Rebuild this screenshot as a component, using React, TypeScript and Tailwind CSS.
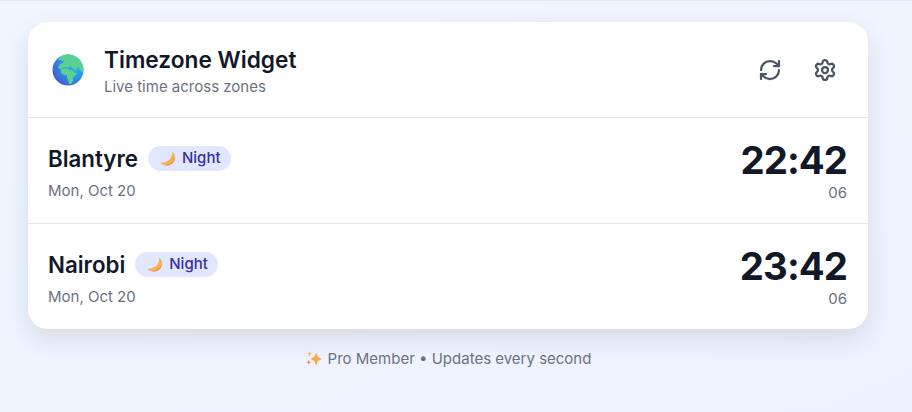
import { RefreshCw, Settings } from "lucide-react";

function Globe() {
  return (
    <svg width="32" height="32" viewBox="0 0 32 32" aria-hidden="true">
      <defs>
        <radialGradient id="sea" cx="0.8" cy="0.25" r="1">
          <stop offset="0" stopColor="#27c0f2" />
          <stop offset="0.55" stopColor="#2d8ce8" />
          <stop offset="1" stopColor="#4f4cc0" />
        </radialGradient>
        <clipPath id="disc">
          <circle cx="16" cy="16" r="15.500" />
        </clipPath>
      </defs>
      <circle cx="16" cy="16" r="15.500" fill="url(#sea)" />
      <g clipPath="url(#disc)" fill="#5bd190">
        <path d="M10 0h19v9l3 7-3 2-2-4-2-1-1 4-3-3-3-2-2 2-3-1-4 2-3-1 2-4 3-1 1-2-3-1-3 1z" />
        <path d="M9 15l4-1 3 1 3 1 3 1 1 2 2 0-2 3-2 2v3l-2 3-2 0-1-4-1-3 0-2-3 0-3-2z" />
      </g>
    </svg>
  );
}

function Moon() {
  return (
    <svg width="16" height="16" viewBox="0 0 16 16" aria-hidden="true">
      <path d="M12.200 1c3 1.500 3.600 5.800 1.800 9C11.500 14 6 15.800 1.200 13c-.6-.4-.4-1.100.2-1.200C6.500 11.500 12.800 8 12.200 1z" fill="#f7b052" />
      <path d="M14.800 6c-.2 3.800-3 7-9.800 8.200 4 .8 7.500-.9 9.200-4 .6-1.300.8-2.800.6-4.200z" fill="#e58a32" />
    </svg>
  );
}

function Sparkles() {
  return (
    <svg width="16" height="16" viewBox="0 0 16 16" aria-hidden="true">
      <path d="M10.200 1.500l1.500 4.300L16 8l-4.300 2.100L10.200 15 8.500 10.100 4.300 8l4.200-2.200z" fill="#fda643" />
      <path d="M3.500 0l.7 2 1.800.8-1.800.8-.7 2-.7-2L1 2.800l1.800-.8z" fill="#fdb45e" />
      <path d="M2.800 8.500l.7 2 1.800.8-1.800.8-.7 2-.7-2-1.800-.8 1.800-.8z" fill="#fb8a5e" />
    </svg>
  );
}

function Row({ city, time, border }: { city: string; time: string; border?: boolean }) {
  return (
    <div className={`flex items-center justify-between pr-[21px] pl-5 ${border ? "h-[106px] border-b border-[#e5e7eb]" : "h-[105px]"}`}>
      <div className="pt-1">
        <div className="flex items-center gap-2.5">
          <span className="text-[22.3px] leading-7 font-semibold text-[#111827]">{city}</span>
          <span className="flex h-[25px] items-center gap-1.5 rounded-full bg-[#e0e7ff] pr-2.5 pl-3 text-[15px] font-medium text-[#3730a3]">
            <Moon />
            Night
          </span>
        </div>
        <div className="mt-2 text-[15px] leading-5 text-[#6b7280]">Mon, Oct 20</div>
      </div>
      <div className="pt-px text-right">
        <div className="text-[38.4px] leading-10 font-bold tracking-[-0.025em] text-[#111827]">{time}</div>
        <div className="mt-[3px] text-[15px] leading-5 text-[#6b7280]">06</div>
      </div>
    </div>
  );
}

export default function App() {
  return (
    <div className="h-[412px] border-t border-[#e5e7eb] bg-linear-to-br from-[#eff6ff] to-[#eef2ff] pt-[21px] pl-7 font-['Inter',sans-serif]">
      <div className="w-[840px] rounded-[20px] bg-white shadow-[0_10px_25px_rgba(0,0,0,0.1)]">
        <div className="flex h-24 items-center justify-between border-b border-[#e5e7eb] pr-[31px] pl-6">
          <div className="flex items-center gap-5">
            <Globe />
            <div className="pt-1.5">
              <div className="text-[22.7px] leading-7 font-semibold text-[#111827]">Timezone Widget</div>
              <div className="text-[15px] leading-[26px] text-[#6b7280]">Live time across zones</div>
            </div>
          </div>
          <div className="flex items-center gap-[31px] text-[#4b5563]">
            <RefreshCw size={24} strokeWidth={2.25} />
            <Settings size={24} strokeWidth={2.25} />
          </div>
        </div>
        <Row city="Blantyre" time="22:42" border />
        <Row city="Nairobi" time="23:42" />
      </div>
      <div className="mt-5 flex w-[841px] items-center justify-center gap-1.5 text-[15px] leading-5 text-[#6b7280]">
        <Sparkles />
        Pro Member • Updates every second
      </div>
    </div>
  );
}
